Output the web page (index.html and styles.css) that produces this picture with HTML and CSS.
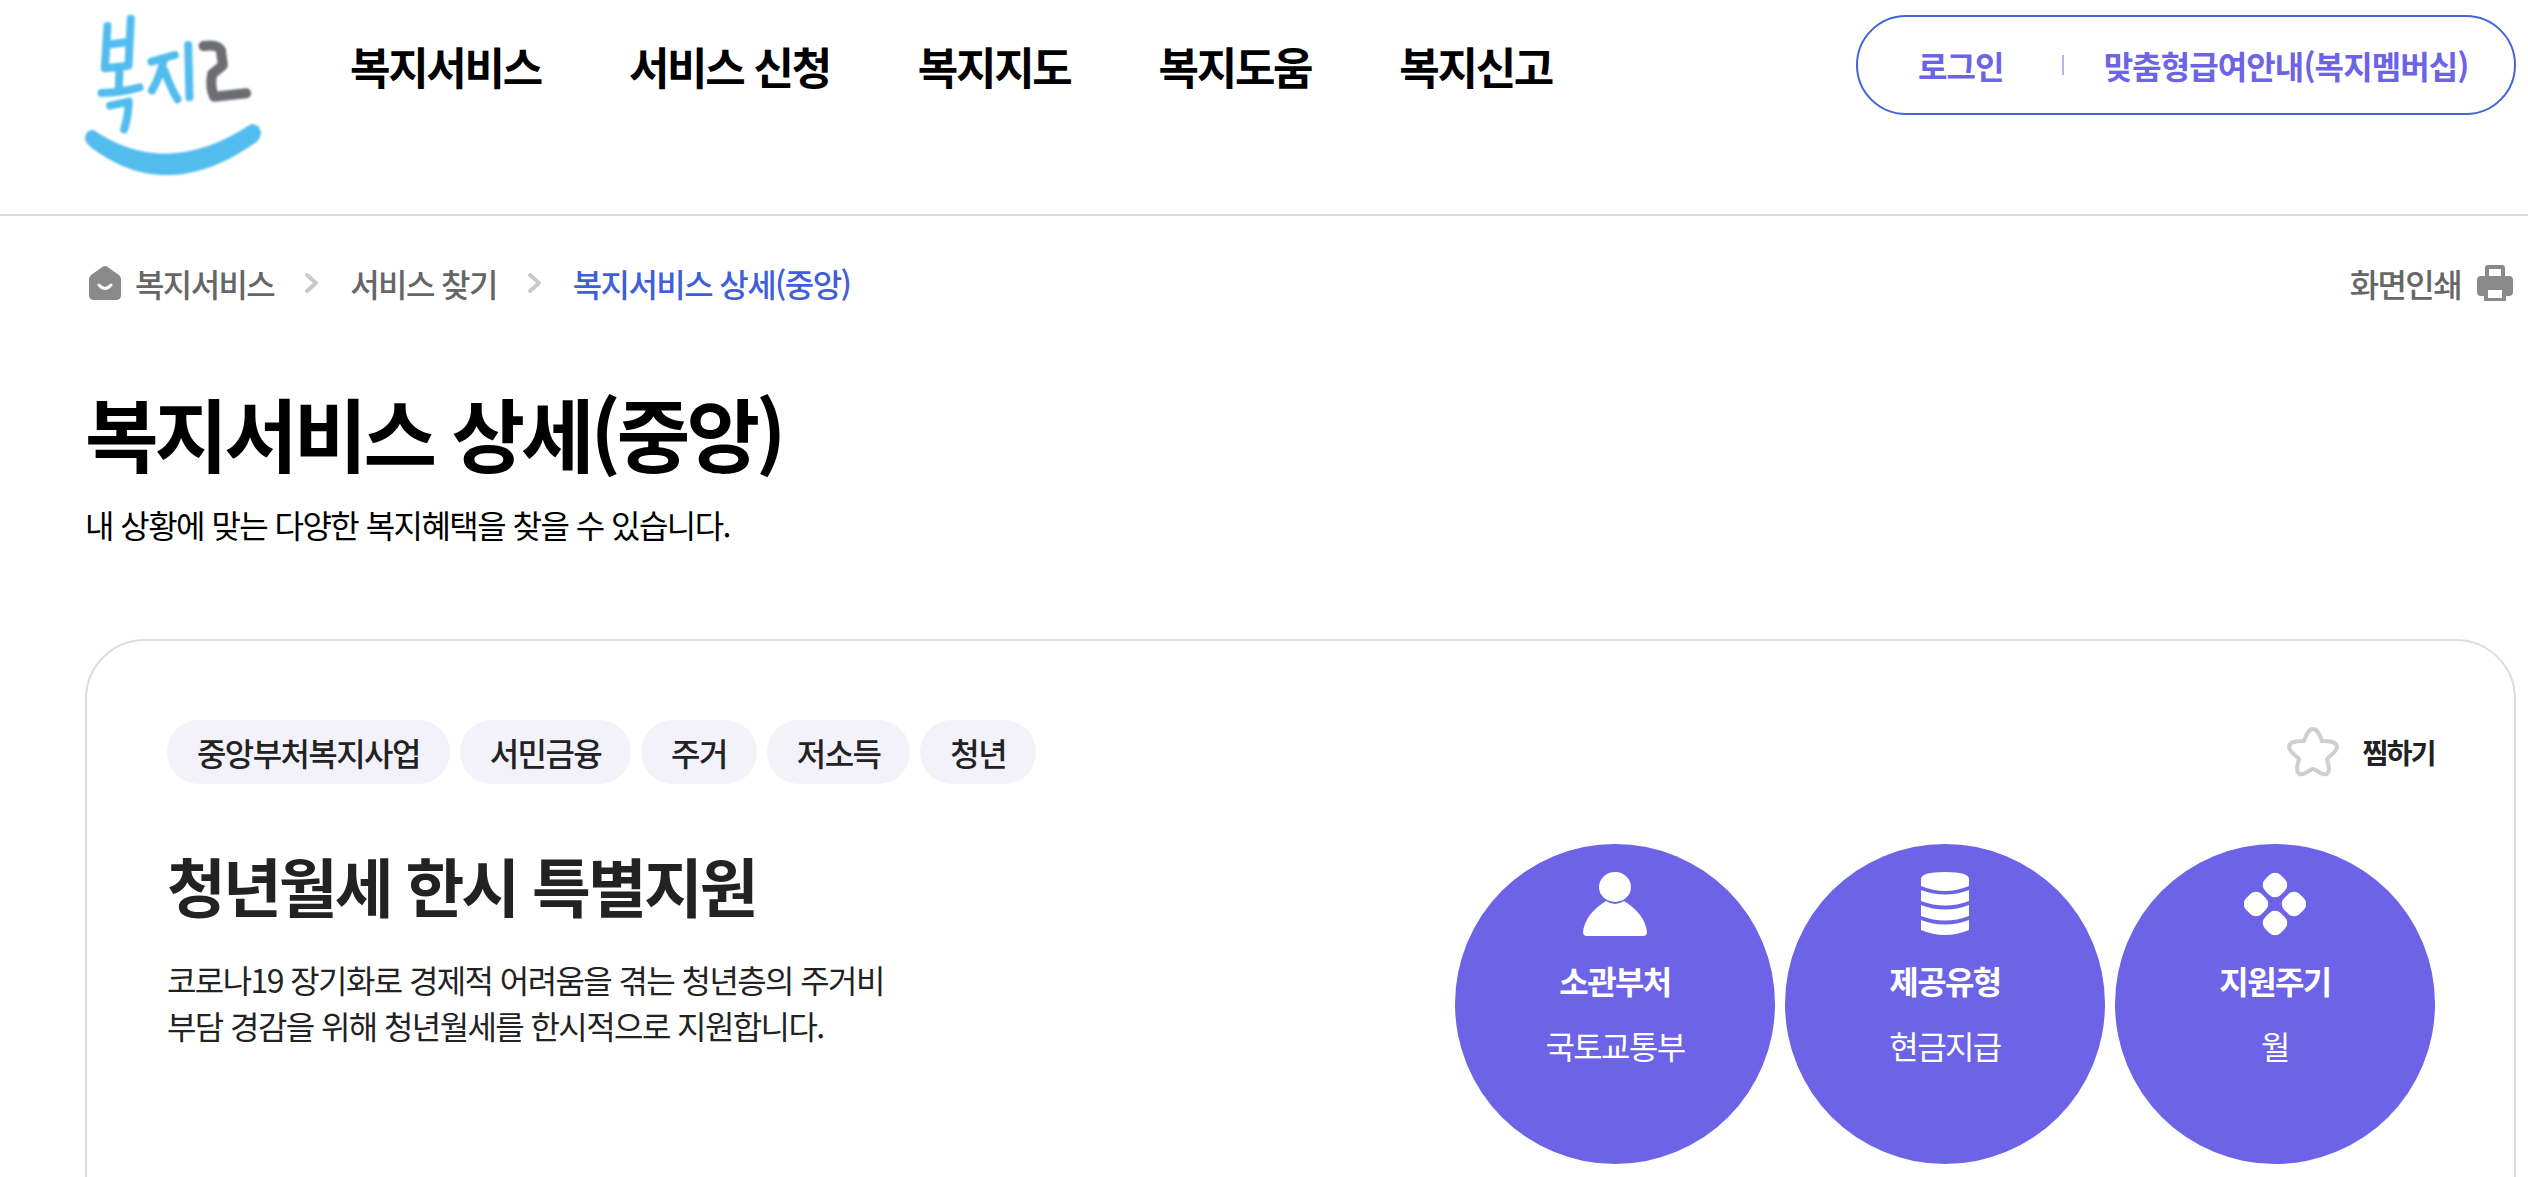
FILE: index.html
```html
<!DOCTYPE html>
<html lang="ko">
<head>
<meta charset="utf-8">
<title>복지서비스 상세(중앙)</title>
<link rel="stylesheet" href="styles.css">
</head>
<body>
<header class="header">
  <a class="logo" href="#" aria-label="복지로">
    <svg class="logo-svg" viewBox="75 45 530 480" width="177" height="160">
      <g fill="none" stroke="#52bcef" stroke-linecap="round" stroke-linejoin="round" stroke-width="24">
        <path d="M142 78 L134 205 L205 197 L212 55 M138 135 L208 125"/>
        <path d="M178 205 L176 265 M124 279 Q180 278 238 262"/>
        <path d="M150 317 L206 305 Q204 350 192 388"/>
        <path d="M274 185 L344 165 M312 175 Q300 230 275 272 M312 210 Q330 260 352 298 M384 135 L388 292"/>
      </g>
      <path fill="none" stroke="#6c6e73" stroke-linecap="round" stroke-linejoin="round" stroke-width="30" d="M430 138 Q472 132 482 150 L488 196 L456 222 Q448 260 462 290 L558 280"/>
      <path fill="#52bcef" d="M100 390 Q320 540 572 373 Q600 372 603 400 Q600 415 590 425 Q320 618 90 440 Q72 425 75 410 Q80 388 100 390Z"/>
    </svg>
  </a>
  <nav class="nav">
    <a href="#">복지서비스</a>
    <a href="#">서비스 신청</a>
    <a href="#">복지지도</a>
    <a href="#">복지도움</a>
    <a href="#">복지신고</a>
  </nav>
  <div class="auth">
    <a href="#">로그인</a>
    <span class="auth-sep"></span>
    <a href="#">맞춤형급여안내(복지멤버십)</a>
  </div>
</header>

<div class="crumbs">
  <ol class="crumb-list">
    <li class="crumb">
      <svg class="home-icon" viewBox="0 0 32 34" width="32" height="34"><path fill="#8a8a8a" d="M16 0 Q18 0 20 2 L30 9 Q32 11 32 13 V29 Q32 34 27 34 H5 Q0 34 0 29 V13 Q0 11 2 9 L12 2 Q14 0 16 0Z"/><path fill="none" stroke="#fff" stroke-width="3" stroke-linecap="round" d="M10 19 Q16 26 22 19"/></svg>
      복지서비스
    </li>
    <li class="chev"><svg viewBox="0 0 16 22" width="16" height="22"><path fill="none" stroke="#c9c9c9" stroke-width="4" stroke-linecap="round" stroke-linejoin="round" d="M3 3 L12 11 L3 19"/></svg></li>
    <li class="crumb">서비스 찾기</li>
    <li class="chev"><svg viewBox="0 0 16 22" width="16" height="22"><path fill="none" stroke="#c9c9c9" stroke-width="4" stroke-linecap="round" stroke-linejoin="round" d="M3 3 L12 11 L3 19"/></svg></li>
    <li class="crumb crumb-current">복지서비스 상세(중앙)</li>
  </ol>
  <a class="print" href="#">화면인쇄
    <svg viewBox="0 0 36 36" width="36" height="36"><path fill="#8a8a8a" fill-rule="evenodd" d="M8 3 Q8 0 11 0 H25 Q28 0 28 3 V11 H32 Q36 11 36 15 V27 Q36 31 32 31 H29 V36 H7 V31 H4 Q0 31 0 27 V15 Q0 11 4 11 H8 Z M12 4 V11 H24 V4 Z M11 25 V33 H25 V25 Z"/></svg>
  </a>
</div>

<main class="main">
  <h1 class="page-title">복지서비스 상세(중앙)</h1>
  <p class="page-sub">내 상황에 맞는 다양한 복지혜택을 찾을 수 있습니다.</p>

  <section class="card">
    <div class="card-top">
      <ul class="tags">
        <li class="tag">중앙부처복지사업</li>
        <li class="tag">서민금융</li>
        <li class="tag">주거</li>
        <li class="tag">저소득</li>
        <li class="tag">청년</li>
      </ul>
      <button class="fav" type="button">
        <svg class="fav-star" viewBox="0 0 52 52" width="52" height="52"><path fill="none" stroke="#cfcfcf" stroke-width="4" stroke-linejoin="round" d="M26 3 C31 3 33 10 35 15 C40 15 50 15 50 21 C50 26 43 29 40 33 C41 38 44 44 40 48 C36 50 30 44 26 43 C22 44 16 50 12 48 C8 44 11 38 12 33 C9 29 2 26 2 21 C2 15 12 15 17 15 C19 10 21 3 26 3Z"/></svg>
        <span>찜하기</span>
      </button>
    </div>
    <div class="card-body">
      <div class="intro">
        <h2 class="intro-title">청년월세 한시 특별지원</h2>
        <p class="intro-text">코로나19 장기화로 경제적 어려움을 겪는 청년층의 주거비<br>부담 경감을 위해 청년월세를 한시적으로 지원합니다.</p>
      </div>
      <ul class="facts">
        <li class="fact">
          <svg class="fact-icon" viewBox="0 0 64 64" width="64" height="64"><ellipse cx="32" cy="15" rx="16" ry="15" fill="#fff"/><path fill="#fff" d="M23 29 Q32 35 41 29 Q62 42 64 60 Q64 64 60 64 H4 Q0 64 0 60 Q2 42 23 29Z"/></svg>
          <strong class="fact-label">소관부처</strong>
          <span class="fact-value">국토교통부</span>
        </li>
        <li class="fact">
          <svg class="fact-icon" viewBox="0 0 48 64" width="48" height="64"><g fill="#fff"><path d="M0 7 Q0 0 24 0 Q48 0 48 7 V14 Q24 24 0 14Z"/><path d="M0 18 Q24 27 48 18 V29 Q24 38 0 29Z"/><path d="M0 33 Q24 42 48 33 V44 Q24 53 0 44Z"/><path d="M0 48 Q24 57 48 48 V58 Q24 68 0 58Z"/></g></svg>
          <strong class="fact-label">제공유형</strong>
          <span class="fact-value">현금지급</span>
        </li>
        <li class="fact">
          <svg class="fact-icon" viewBox="0 0 62 62" width="62" height="64"><g fill="#fff"><rect x="20" y="1" width="22" height="22" rx="8" transform="rotate(45 31 12)"/><rect x="20" y="39" width="22" height="22" rx="8" transform="rotate(45 31 50)"/><rect x="1" y="20" width="22" height="22" rx="8" transform="rotate(45 12 31)"/><rect x="39" y="20" width="22" height="22" rx="8" transform="rotate(45 50 31)"/></g></svg>
          <strong class="fact-label">지원주기</strong>
          <span class="fact-value">월</span>
        </li>
      </ul>
    </div>
  </section>
</main>
</body>
</html>
```

FILE: styles.css
```css
* { box-sizing: border-box; }
html, body { margin: 0; padding: 0; }
body {
  height: 1177px;
  overflow: hidden;
  background: #fff;
  color: #000;
  font-family: "Noto Sans CJK KR", "Noto Sans", sans-serif;
}
a { color: inherit; text-decoration: none; }
ul, ol { list-style: none; margin: 0; padding: 0; }
h1, h2, p { margin: 0; }

.header {
  display: flex;
  align-items: flex-start;
  height: 216px;
  padding: 15px 12px 0 85px;
  border-bottom: 2px solid #ddd;
}
.logo { display: block; height: 160px; }
.logo-svg { display: block; filter: blur(0.8px); }
.nav {
  display: flex;
  gap: 88px;
  margin: 21px 0 0 88px;
  font-size: 44px;
  font-weight: 700;
  line-height: 60px;
  letter-spacing: -2.3px;
}
.auth {
  display: flex;
  align-items: center;
  width: 660px;
  height: 100px;
  margin-left: auto;
  padding: 0 0 0 60px;
  border: 2px solid #4464d8;
  border-radius: 50px;
  color: #6c63e6;
  font-size: 32px;
  font-weight: 700;
  letter-spacing: -0.9px;
}
.auth-sep { width: 2px; height: 20px; margin: 0 40px 0 58px; background: #b9b5f2; }

.crumbs {
  display: flex;
  align-items: center;
  justify-content: space-between;
  height: 40px;
  margin-top: 47px;
  padding: 0 15px 0 89px;
  color: #666;
  font-size: 32px;
  font-weight: 500;
  letter-spacing: -1.6px;
}
.crumb-list { display: flex; align-items: center; }
.crumb { display: flex; align-items: center; gap: 14px; }
.crumb-current { color: #3f5fd8; }
.chev { display: flex; margin: 0 30px; }
.print { display: flex; align-items: center; gap: 16px; }

.main { padding: 0 12px 0 85px; }
.page-title {
  margin-top: 78px;
  font-size: 80px;
  font-weight: 700;
  line-height: 100px;
  letter-spacing: -4px;
}
.page-sub {
  margin-top: 21px;
  font-size: 32px;
  line-height: 44px;
  letter-spacing: -1.55px;
}
.card {
  height: 800px;
  margin-top: 93px;
  padding: 79px 79px 0 80px;
  border: 2px solid #ddd;
  border-radius: 60px;
}
.card-top { display: flex; align-items: center; justify-content: space-between; }
.tags { display: flex; gap: 10px; }
.tag {
  height: 64px;
  padding: 0 30px;
  border-radius: 32px;
  background: #f3f2fb;
  color: #222;
  font-size: 32px;
  font-weight: 500;
  line-height: 64px;
  letter-spacing: -1.6px;
}
.fav {
  display: flex;
  align-items: center;
  gap: 24px;
  padding: 0;
  border: 0;
  background: none;
  color: #222;
  font: inherit;
  font-size: 28px;
  font-weight: 700;
  letter-spacing: -1.6px;
}
.fav-star { filter: blur(0.5px); }
.card-body { display: flex; justify-content: space-between; margin-top: 60px; }
.intro-title {
  font-size: 64px;
  font-weight: 700;
  line-height: 80px;
  letter-spacing: -3px;
  color: #222;
}
.intro-text {
  margin-top: 32px;
  color: #222;
  font-size: 32px;
  line-height: 46px;
  letter-spacing: -1.6px;
}
.facts { display: flex; gap: 10px; }
.fact {
  display: flex;
  flex-direction: column;
  align-items: center;
  width: 320px;
  height: 320px;
  padding-top: 28px;
  border-radius: 50%;
  background: #6c63e6;
  color: #fff;
  letter-spacing: -1.6px;
}
.fact-icon { display: block; }
.fact-label { margin-top: 22px; font-size: 32px; font-weight: 700; line-height: 44px; }
.fact-value { margin-top: 21px; font-size: 32px; line-height: 44px; }
```
